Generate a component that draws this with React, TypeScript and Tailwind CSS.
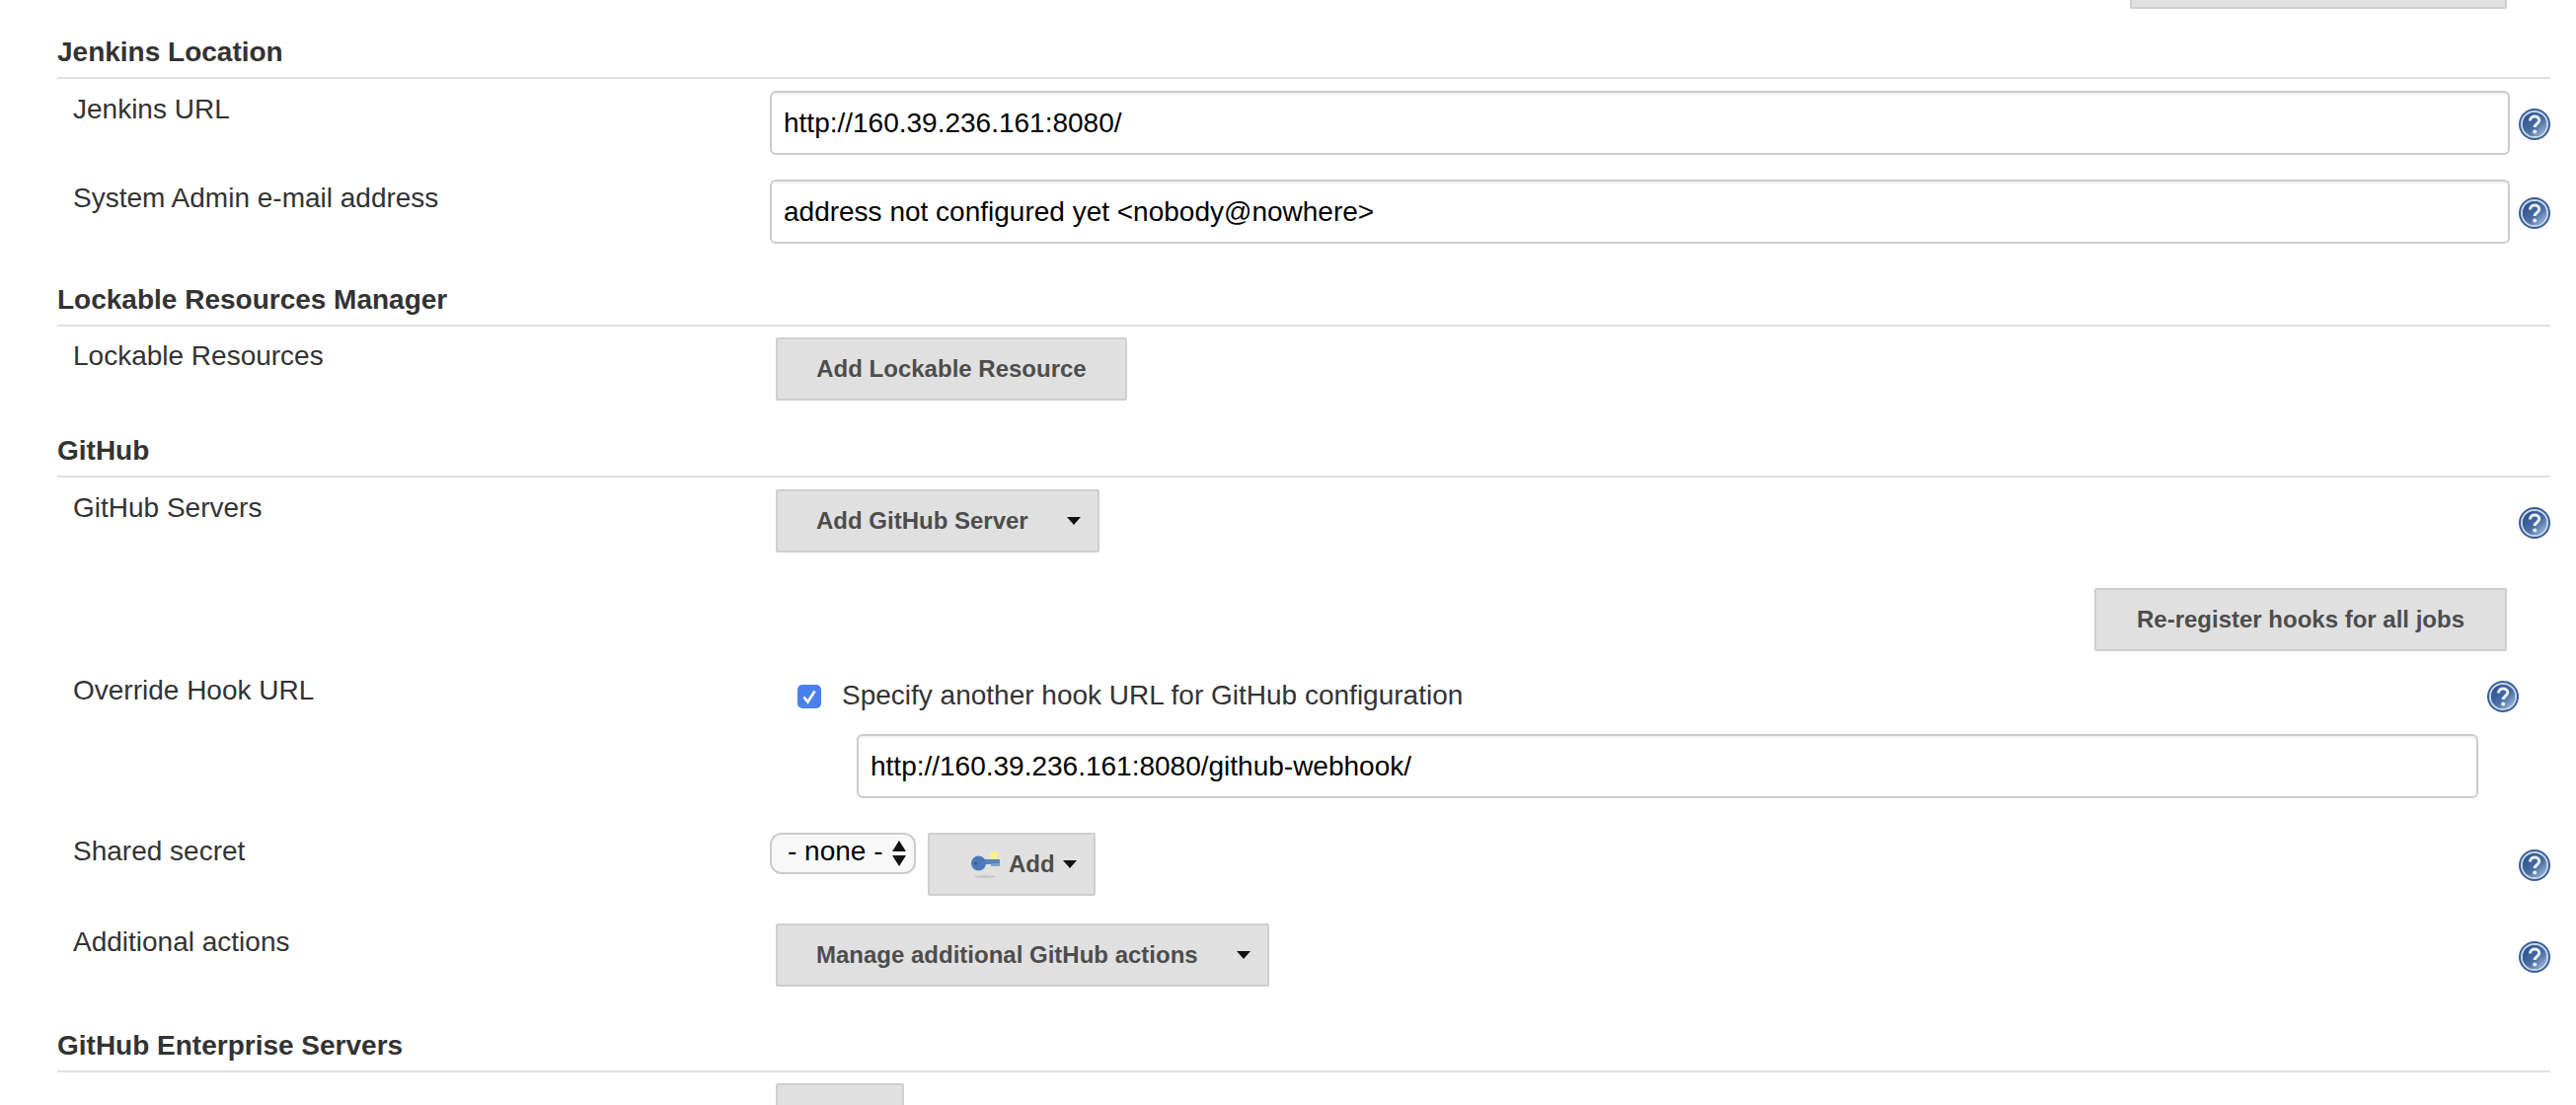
import type { ReactNode } from "react";

function HelpIcon() {
  return (
    <svg viewBox="0 0 32 32" className="w-8 h-8 blur-[0.5px]">
      <defs>
        <linearGradient id="helpFill" x1="0.2" y1="0.1" x2="0.9" y2="0.9">
          <stop offset="0" stopColor="#2f5590" />
          <stop offset="0.55" stopColor="#4a6ea3" />
          <stop offset="1" stopColor="#9ab3d3" />
        </linearGradient>
      </defs>
      <circle cx="16" cy="16" r="16" fill="#3a6098" />
      <circle cx="16" cy="16" r="13" fill="none" stroke="#c9d6e8" strokeWidth="2" />
      <circle cx="16" cy="16" r="12" fill="url(#helpFill)" />
      <path
        d="M11.5 12.5c0-3 2.2-4.5 4.7-4.5s4.6 1.5 4.6 4c0 3.6-4.6 3.4-4.6 7"
        fill="none"
        stroke="#e8eef6"
        strokeWidth="3"
      />
      <circle cx="16.2" cy="23.6" r="2" fill="#e8eef6" />
    </svg>
  );
}

function Caret() {
  return (
    <svg viewBox="0 0 14 8" className="w-3.5 h-2 shrink-0">
      <path d="M0 0h14L7 8z" fill="#111" />
    </svg>
  );
}

function KeyIcon() {
  return (
    <svg viewBox="0 0 30 30" className="w-[30px] h-[30px] shrink-0 blur-[0.7px]">
      <ellipse cx="14" cy="27.5" rx="11" ry="1.5" fill="#c8c8c8" />
      <circle cx="23" cy="6" r="4" fill="#f8f27e" />
      <rect x="8" y="10" width="21" height="5" rx="1" fill="#5583bd" />
      <rect x="20" y="14" width="9" height="3" fill="#7f9fc8" />
      <circle cx="7.5" cy="14" r="7.5" fill="#4a7bb8" />
      <circle cx="4.5" cy="14" r="1.5" fill="#33577f" />
    </svg>
  );
}

function Button({ children, className = "" }: { children: ReactNode; className?: string }) {
  return (
    <button
      className={`flex items-center h-16 bg-[#e0e0e0] border-2 border-[#cfcfcf] rounded-[2px] text-[24px] font-bold text-[#4d4d4d] whitespace-nowrap ${className}`}
    >
      {children}
    </button>
  );
}

function Heading({ title, className = "" }: { title: string; className?: string }) {
  return (
    <div className={`border-b-2 border-[#e0e0e0] pb-1.5 text-[28px] leading-[38px] font-bold text-[#333] ${className}`}>
      {title}
    </div>
  );
}

function TextInput({ value, className = "" }: { value: string; className?: string }) {
  return (
    <input
      readOnly
      value={value}
      className={`block h-[65px] px-3 bg-white border-2 border-[#ccc] rounded-[6px] shadow-[inset_0_2px_2px_#f2f2f2] text-[28px] text-black outline-none ${className}`}
    />
  );
}

function Row({
  label,
  children,
  help = false,
  helpTop = "pt-[18px]",
  className = "",
}: {
  label: string;
  children: ReactNode;
  help?: boolean;
  helpTop?: string;
  className?: string;
}) {
  return (
    <div className={`flex ${className}`}>
      <div className="w-[722px] shrink-0 pl-4 text-[28px] leading-[38px] text-[#333]">{label}</div>
      <div className="flex-1 min-w-0">{children}</div>
      {help && (
        <div className={`ml-[9px] w-8 shrink-0 ${helpTop}`}>
          <HelpIcon />
        </div>
      )}
    </div>
  );
}

export default function App() {
  return (
    <div className="w-[2610px] h-[1120px] overflow-hidden bg-white pl-[58px] pr-[26px] font-['Liberation_Sans',Arial,sans-serif]">
      {/* Cut off button from the section above */}
      <div className="h-[9px] flex justify-end items-end pr-[44px]">
        <div className="w-[382px] h-16 shrink-0 bg-[#e0e0e0] border-2 border-[#cfcfcf] rounded-[2px]" />
      </div>

      <Heading title="Jenkins Location" className="mt-[25px]" />
      <Row label="Jenkins URL" help className="mt-3">
        <TextInput value="http://160.39.236.161:8080/" className="w-full" />
      </Row>
      <Row label="System Admin e-mail address" help className="mt-[25px]">
        <TextInput value="address not configured yet <nobody@nowhere>" className="w-full" />
      </Row>

      <Heading title="Lockable Resources Manager" className="mt-[38px]" />
      <Row label="Lockable Resources" className="mt-[11px]">
        <Button className="ml-1.5 w-[356px] justify-center">Add Lockable Resource</Button>
      </Row>

      <Heading title="GitHub" className="mt-8" />
      <Row label="GitHub Servers" help className="mt-3">
        <Button className="ml-1.5 w-[328px] pl-[39px]">
          Add GitHub Server
          <span className="ml-[39px]">
            <Caret />
          </span>
        </Button>
      </Row>

      <div className="mt-9 flex justify-end pr-[44px]">
        <Button className="w-[418px] justify-center">Re-register hooks for all jobs</Button>
      </div>

      <Row label="Override Hook URL" className="mt-[21px]">
        <div className="flex items-start pl-7 pr-8">
          <span className="mt-[13px] w-6 h-6 shrink-0 flex items-center justify-center rounded-[5px] bg-[#4a80ea]">
            <svg viewBox="0 0 24 24" className="w-6 h-6">
              <path d="M6.5 12.5l4 5 7-11" fill="none" stroke="#fff" strokeWidth="2.6" />
            </svg>
          </span>
          <span className="ml-[21px] mt-1.5 text-[28px] leading-9 text-[#333]">
            Specify another hook URL for GitHub configuration
          </span>
          <span className="ml-auto mt-[9px]">
            <HelpIcon />
          </span>
        </div>
        <div className="mt-[21px] pl-[88px] pr-[73px]">
          <TextInput value="http://160.39.236.161:8080/github-webhook/" className="w-full" />
        </div>
      </Row>

      <Row label="Shared secret" help helpTop="pt-[17px]" className="mt-[35px]">
        <div className="flex items-start">
          <div className="flex items-center w-[148px] h-[42px] shrink-0 pl-4 pr-2 pb-1 bg-[#f8f8f8] border-2 border-[#ccc] rounded-xl text-[28px] leading-none text-black">
            <span className="whitespace-nowrap">- none -</span>
            <svg viewBox="0 0 14 26" className="ml-auto mt-1 w-3.5 h-[26px] shrink-0">
              <path d="M7 0l7 11H0zM0 15h14L7 26z" fill="#111" />
            </svg>
          </div>
          <Button className="ml-3 w-[170px] pl-[42px]">
            <KeyIcon />
            <span className="ml-2">Add</span>
            <span className="ml-2">
              <Caret />
            </span>
          </Button>
        </div>
      </Row>

      <Row label="Additional actions" help className="mt-7">
        <Button className="ml-1.5 w-[500px] pl-[39px]">
          Manage additional GitHub actions
          <span className="ml-[39px]">
            <Caret />
          </span>
        </Button>
      </Row>

      <Heading title="GitHub Enterprise Servers" className="mt-[41px]" />
      <div className="mt-[11px] ml-[728px]">
        <Button className="w-[130px]">{""}</Button>
      </div>
    </div>
  );
}
